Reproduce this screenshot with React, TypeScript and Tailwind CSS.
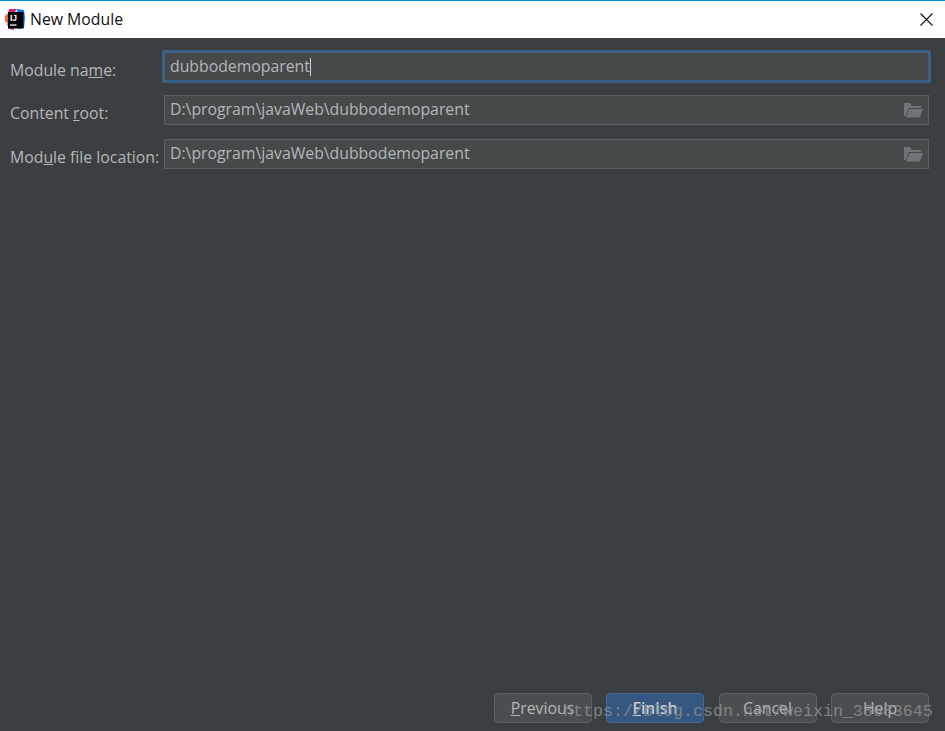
const FONT = "font-['Open_Sans','Noto_Sans',sans-serif]";

function AppLogo() {
  return (
    <svg width="20" height="22" viewBox="0 0 20 22" className="shrink-0">
      <path d="M0 7 L5 2 L8 12 L5 17 L0 12 Z" fill="#f0663f" />
      <path d="M4 0 L12 0 L8 6 L3 5 Z" fill="#e5246f" />
      <path d="M2 15 L9 13 L9 21 L4 20 Z" fill="#ef3a76" />
      <path d="M12 0 L19 1 L20 9 L19 19 L13 20 Z" fill="#087cfa" />
      <rect x="3" y="3" width="15.5" height="16.5" fill="#000" />
      <text x="5" y="11.5" fontSize="8.5" fontWeight="700" fill="#fff" fontFamily="'Liberation Sans', sans-serif">
        IJ
      </text>
      <rect x="5" y="15.4" width="6.5" height="1.3" fill="#fff" />
    </svg>
  );
}

function FolderIcon() {
  return (
    <svg width="19" height="16" viewBox="0 0 19 16" className="shrink-0" fill="#6f7476">
      <path d="M0 1.5 L0 14 L2 14 L5 6 L17 6 L17 4 L7.5 4 L6.5 1 L0.5 1 Z" />
      <path d="M5.8 7 L19 7 L15.8 15.5 L1.8 15.5 Z" />
    </svg>
  );
}

function PathField({ value }: { value: string }) {
  return (
    <div className="flex h-[30px] items-center justify-between border border-[#5d6061] bg-[#45494a] pl-[5px] pr-[5px] text-[15.8px] text-[#b4b7b9]">
      <span className="-mt-[1px]">{value}</span>
      <FolderIcon />
    </div>
  );
}

function Label({ children }: { children: React.ReactNode }) {
  return <div className="pl-[10px] pt-[7px] text-[15.8px] text-[#b4b7b9] whitespace-nowrap">{children}</div>;
}

function DialogButton({ children, primary }: { children: React.ReactNode; primary?: boolean }) {
  return (
    <button
      className={
        "h-[30px] w-[98px] rounded-[4px] border pt-[2px] text-[15.8px] " +
        (primary
          ? "border-[#3c6a99] bg-[#365880] font-semibold text-[#c8ccd0]"
          : "border-[#5d6061] bg-[#4b4e50] text-[#b4b7b9]")
      }
    >
      {children}
    </button>
  );
}

export default function App() {
  return (
    <div className={`relative flex h-[731px] w-[945px] flex-col overflow-hidden bg-[#3c3f41] ${FONT}`}>
      <div className="flex h-[38px] shrink-0 items-center justify-between border-t border-[#0a84d8] bg-white pl-[5px] pr-[12px]">
        <div className="flex items-center gap-[5px] text-[15.8px] text-[#111]">
          <AppLogo />
          <span>New Module</span>
        </div>
        <svg width="13" height="13" viewBox="0 0 13 13" stroke="#111" strokeWidth="1.1" fill="none">
          <path d="M0.5 0.5 L12.5 12.5 M12.5 0.5 L0.5 12.5" />
        </svg>
      </div>

      <div className="grid grid-cols-[164px_1fr] grid-rows-[30px_30px_30px] gap-y-[14px] pl-0 pr-[16px] pt-[13px]">
        <div className="pl-[10px] pt-[8px] text-[15.8px] text-[#b4b7b9]">
          Module na<span className="underline">m</span>e:
        </div>
        <div className="-mx-[2px] -mt-[1px] flex h-[33px] items-center rounded-[2px] border-[3px] border-[#3a6087] bg-[#45494a] pl-[5px] text-[15.8px] text-[#b4b7b9]">
          dubbodemoparent
          <span className="h-[18px] w-px bg-[#d0d0d0]" />
        </div>
        <Label>
          Content <span className="underline">r</span>oot:
        </Label>
        <PathField value="D:\program\javaWeb\dubbodemoparent" />
        <Label>
          Mod<span className="underline">u</span>le file location:
        </Label>
        <PathField value="D:\program\javaWeb\dubbodemoparent" />
      </div>

      <div className="mt-auto flex justify-end gap-[14.5px] pb-[8px] pr-[16px]">
        <DialogButton>
          <span className="underline">P</span>revious
        </DialogButton>
        <DialogButton primary>
          <span className="underline">F</span>inish
        </DialogButton>
        <DialogButton>Cancel</DialogButton>
        <DialogButton>Help</DialogButton>
      </div>

      {/* csdn watermark sits on top of the buttons */}
      <div className="absolute left-[563px] top-[699px] font-['Liberation_Mono',monospace] text-[16.67px] text-[#8f9294]/80 whitespace-nowrap">
        https://blog.csdn.net/weixin_38683645
      </div>
    </div>
  );
}
